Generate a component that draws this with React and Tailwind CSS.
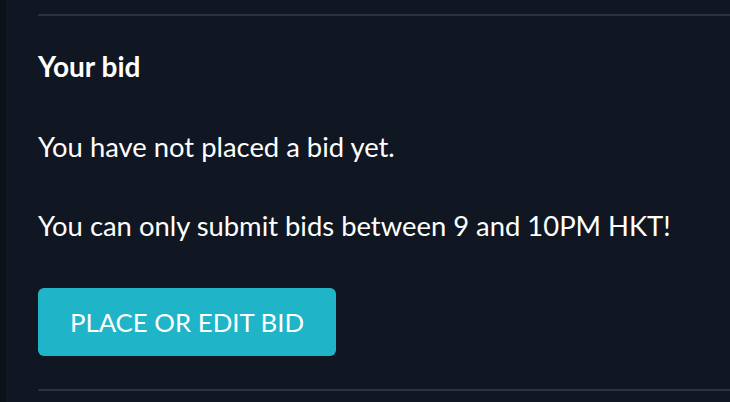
export default function App() {
  return (
    <div className="flex h-[402px] w-[730px] overflow-hidden bg-[#111722] font-['Lato','Open_Sans',sans-serif]">
      <div className="w-[6px] shrink-0 bg-[#0c1018]" />
      <div className="flex-1 pl-[32px] pt-[14px]">
        <div className="h-[2px] bg-[#2d313d]" />
        <h3 className="mt-[31px] text-[28px] leading-[39px] font-bold text-white">Your bid</h3>
        <p className="mt-[41px] text-[27.4px] leading-[39px] text-white">You have not placed a bid yet.</p>
        <p className="mt-[40px] text-[27.4px] leading-[39px] text-white">
          You can only submit bids between 9 and 10PM HKT!
        </p>
        <button className="mt-[43px] flex h-[68px] w-[298px] items-center justify-center rounded-[6px] bg-[#1fb4c8] text-[25.8px] text-white">
          PLACE OR EDIT BID
        </button>
        <div className="mt-[33px] h-[2px] bg-[#2d313d]" />
      </div>
    </div>
  );
}
